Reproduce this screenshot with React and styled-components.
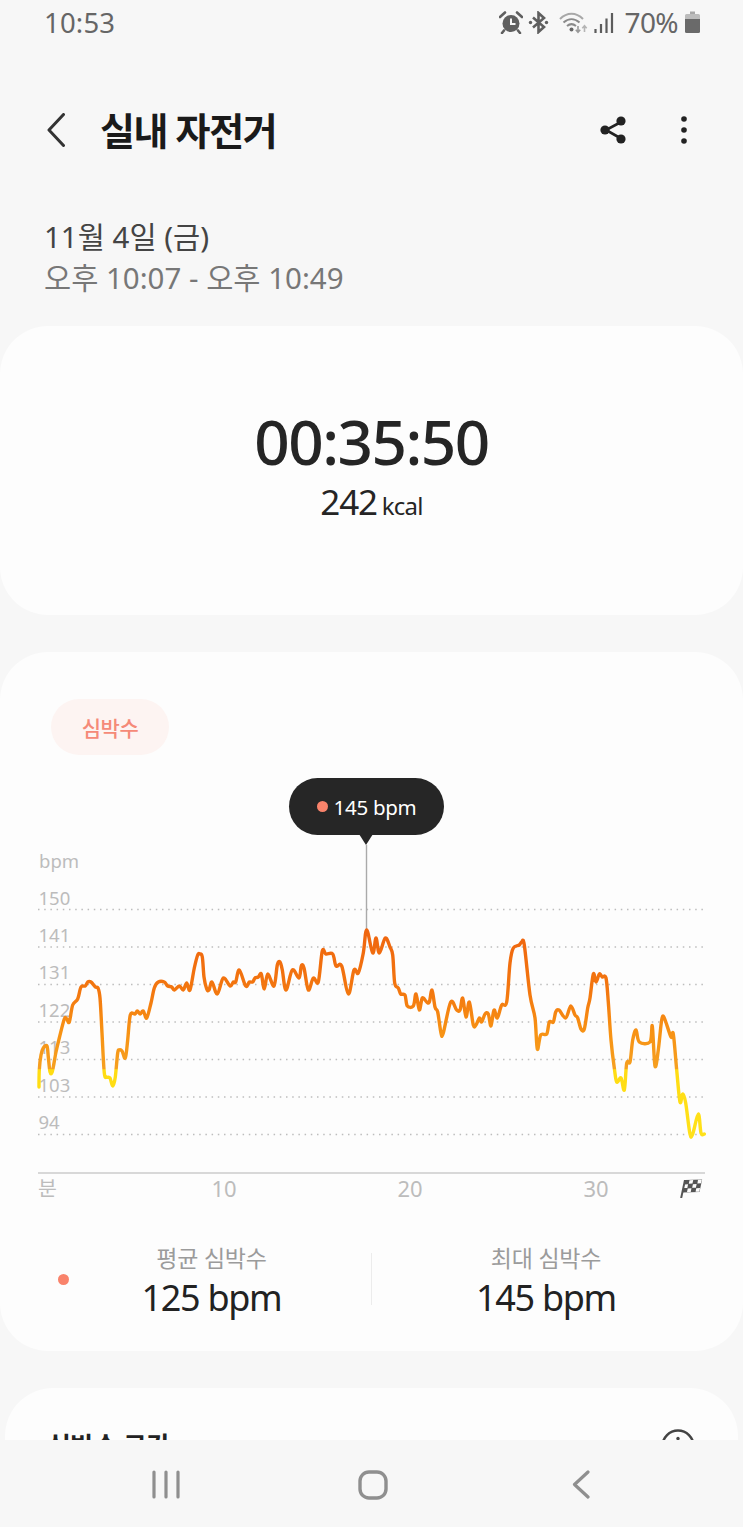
import React from 'react';
import styled, { createGlobalStyle } from 'styled-components';

const GlobalStyle = createGlobalStyle`
  html, body {
    margin: 0;
    padding: 0;
    background: #f7f7f7;
  }
  body {
    font-family: "Noto Sans", "Noto Sans CJK KR", sans-serif;
  }
`;

const Screen = styled.div`
  width: 743px;
  height: 1527px;
  display: flex;
  flex-direction: column;
  background: #f7f7f7;
  overflow: hidden;
`;

const Content = styled.div`
  height: 1440px;
  flex: none;
  overflow: hidden;
`;

const StatusBar = styled.div`
  height: 44px;
  display: flex;
  align-items: center;
  justify-content: space-between;
  padding: 0 43px 0 44px;
  color: #666;
`;

const Clock = styled.div`
  font-size: 27.5px;
  letter-spacing: 0.2px;
`;

const StatusIcons = styled.div`
  display: flex;
  align-items: center;
`;

const Battery = styled.div`
  font-size: 28px;
  letter-spacing: -0.6px;
  margin: 0 7px 0 10px;
`;

const Header = styled.div`
  display: flex;
  align-items: center;
  height: 44px;
  margin-top: 64px;
  padding-left: 47px;
`;

const Title = styled.h1`
  flex: 1;
  margin: 0 0 0 35px;
  padding-bottom: 4px;
  font-size: 38px;
  font-weight: 700;
  letter-spacing: -1.4px;
  color: #1a1a1a;
`;

const HeaderIcons = styled.div`
  display: flex;
  align-items: center;
  gap: 54px;
  padding-right: 56px;
`;

const DateBlock = styled.div`
  padding: 64px 44px 28px;
`;

const DateLine = styled.div`
  height: 41px;
  line-height: 41px;
  font-size: 29.5px;
  white-space: nowrap;
  color: ${(p) => (p.$muted ? '#777' : '#444')};
`;

const Card = styled.section`
  background: #fdfdfd;
  border-radius: 48px;
  margin: 0 ${(p) => p.$inset || 0}px 37px;
  height: ${(p) => p.$height}px;
  box-sizing: border-box;
`;

const SummaryCard = styled(Card)`
  display: flex;
  flex-direction: column;
  align-items: center;
  padding-top: 80px;
`;

const Timer = styled.div`
  font-size: 62px;
  font-weight: 500;
  line-height: 70px;
  letter-spacing: -1.5px;
  color: #252525;
`;

const Calories = styled.div`
  display: flex;
  align-items: baseline;
  gap: 5px;
  margin-top: 1px;
  color: #252525;
  font-size: 35px;
  line-height: 50px;
  letter-spacing: -1.2px;
  small {
    font-size: 24px;
    letter-spacing: -0.8px;
  }
`;

const Chip = styled.div`
  width: 118px;
  height: 56px;
  margin-left: 51px;
  border-radius: 28px;
  display: flex;
  align-items: center;
  justify-content: center;
  background: #fdf4f2;
  color: #f58a78;
  font-size: 21px;
  font-weight: 500;
  letter-spacing: -0.5px;
`;

const HeartCard = styled(Card)`
  padding-top: 47px;
`;

const ChartWrap = styled.div`
  position: relative;
  height: 440px;
  margin-top: 15px;
`;

const ChartSvg = styled.svg`
  display: block;
`;

const AxisLabel = styled.text`
  font-family: "Noto Sans", "Noto Sans CJK KR", sans-serif;
  font-size: ${(p) => p.$size || 18.5}px;
  fill: #bcbcbc;
`;

const Tooltip = styled.div`
  position: absolute;
  left: 289px;
  top: 8px;
  width: 155px;
  height: 57px;
  border-radius: 29px;
  background: #262626;
  color: #fff;
  font-size: 20.5px;
  letter-spacing: -0.3px;
  display: flex;
  align-items: center;
  justify-content: center;
  gap: 6px;
  &::after {
    content: '';
    position: absolute;
    left: 70px;
    top: 56px;
    border: 7.5px solid transparent;
    border-top: 11px solid #262626;
    border-bottom: 0;
  }
`;

const Dot = styled.span`
  width: 11px;
  height: 11px;
  border-radius: 50%;
  background: #f9836b;
  flex: none;
`;

const Stats = styled.div`
  display: grid;
  grid-template-columns: 319px 1fr;
  padding: 32px 22px 0 52px;
`;

const LegendDot = styled(Dot)`
  grid-area: 1 / 1;
  align-self: center;
  margin: 0 0 0 6px;
`;

const Stat = styled.div`
  grid-area: 1 / ${(p) => p.$col};
  display: flex;
  flex-direction: column;
  align-items: center;
  height: 74px;
`;

const Divider = styled.div`
  grid-area: 1 / 2;
  justify-self: start;
  width: 1px;
  height: 52px;
  margin-top: 11px;
  background: #ececec;
`;

const StatLabel = styled.div`
  font-size: 23px;
  line-height: 32px;
  letter-spacing: -0.2px;
  color: #9b9b9b;
`;

const StatValue = styled.div`
  font-size: 36px;
  line-height: 48px;
  letter-spacing: -1.3px;
  color: #222;
`;

const ZoneHeader = styled.div`
  display: flex;
  align-items: center;
  justify-content: space-between;
  padding: 40px 43px 0 42px;
`;

const ZoneTitle = styled.div`
  font-size: 26px;
  font-weight: 700;
  line-height: 36px;
  letter-spacing: -0.6px;
  color: #222;
`;

const NavBar = styled.div`
  flex: 1;
  display: grid;
  grid-template-columns: repeat(3, 1fr);
  justify-items: center;
  padding: 30px 58px 0 62px;
  background: #f7f7f7;
`;

const points = [
  [39, 1087], [39.3, 1070], [41, 1055], [43.3, 1048], [47, 1046], [48.3, 1057], [50, 1072], [51.7, 1073],
  [53.3, 1067], [56, 1052], [59.3, 1038], [64.3, 1019], [66.7, 1019], [69.3, 1022], [72.7, 1005], [77.7, 999],
  [81, 987], [85.3, 986], [87.7, 982], [91, 982], [95.3, 987], [98, 988], [100, 998], [102, 1033],
  [104.3, 1073], [106.7, 1077], [110, 1078], [112.7, 1086], [115.3, 1077], [117.7, 1053], [119.3, 1050], [122, 1051],
  [125.3, 1058], [127.7, 1040], [130.3, 1015], [135, 1014], [137.3, 1011], [140.3, 1014], [143.3, 1011], [146.7, 1018],
  [151, 1003], [154.3, 988], [158.3, 982], [164.3, 982], [167.7, 986], [171.7, 987], [174.3, 990], [179.3, 986],
  [183.3, 990], [186.7, 983], [190, 990], [194.3, 968], [197.7, 955], [200, 954], [202.3, 957], [204, 977],
  [206.7, 989], [209, 990], [212, 982], [217.3, 994], [223.3, 978], [230, 986], [233.3, 982], [235.7, 982],
  [239.3, 970], [245.7, 986], [249.3, 982], [252.7, 982], [255, 978], [258.3, 977], [261.3, 974], [264.3, 989],
  [267.7, 974], [274, 986], [277.3, 965], [280, 962], [282.3, 970], [286, 990], [292.3, 970], [299, 978],
  [301.3, 966], [304, 968], [308.3, 990], [313.3, 978], [318.3, 982], [322.3, 951], [326, 954], [332.7, 954],
  [336, 966], [341.7, 966], [348.3, 994], [354, 970], [358.3, 973], [363.3, 953], [366.7, 930], [372.7, 953],
  [376, 938], [379.3, 953], [385.3, 938], [390, 947], [392.7, 955], [394.7, 983], [398.3, 988], [400.7, 994],
  [405, 995], [407.3, 1006], [413.3, 1006], [416, 994], [419.3, 1010], [422.3, 998], [426.7, 1002], [429.3, 1002],
  [432, 990], [435, 1007], [437.7, 1012], [441, 1033], [443.3, 1033], [450.7, 1002], [456.7, 1010], [460, 1010],
  [462.7, 998], [466, 1017], [469.3, 1002], [473.3, 1025], [476, 1025], [479.3, 1018], [481.7, 1022], [485, 1014],
  [488.3, 1014], [491, 1026], [494, 1010], [497.3, 1018], [501.7, 1005], [506.7, 1002], [510, 963], [513.3, 948],
  [519.3, 945], [521.7, 942], [524.3, 945], [530, 995], [535, 1018], [537.3, 1049], [540.7, 1035], [546.7, 1034],
  [549.3, 1022], [553.3, 1022], [555.7, 1012], [559, 1010], [565.7, 1018], [570.7, 1006], [575, 1015], [577.7, 1018],
  [581, 1029], [584.3, 1029], [587.7, 1008], [590, 998], [593.3, 974], [596, 982], [599.3, 974], [602.3, 977],
  [606, 978], [608.3, 1002], [611, 1040], [614.3, 1068], [616.7, 1082], [621, 1078], [624.3, 1090], [626.7, 1063],
  [630, 1062], [632.7, 1040], [636, 1030], [639.3, 1042], [650, 1042], [652.3, 1026], [655, 1066], [658.3, 1050],
  [661.7, 1020], [664.3, 1018], [671, 1037], [673.3, 1034], [676.7, 1070], [680, 1102], [682.7, 1094], [685.7, 1103],
  [690, 1134], [692.7, 1134], [698.3, 1114], [701, 1133], [704.3, 1134],
];

// catmull-rom through the traced samples, keeps the peaks round
const smoothPath = (pts) => {
  let d = `M${pts[0][0]} ${pts[0][1]}`;
  for (let i = 0; i < pts.length - 1; i++) {
    const p0 = pts[i - 1] || pts[i];
    const p1 = pts[i];
    const p2 = pts[i + 1];
    const p3 = pts[i + 2] || p2;
    const c1x = p1[0] + (p2[0] - p0[0]) / 6;
    const c1y = p1[1] + (p2[1] - p0[1]) / 6;
    const c2x = p2[0] - (p3[0] - p1[0]) / 6;
    const c2y = p2[1] - (p3[1] - p1[1]) / 6;
    d += `C${c1x.toFixed(1)} ${c1y.toFixed(1)} ${c2x.toFixed(1)} ${c2y.toFixed(1)} ${p2[0]} ${p2[1]}`;
  }
  return d;
};

const gridLines = [
  { y: 909.5, label: '150', base: 905 },
  { y: 947, label: '141', base: 942 },
  { y: 984.5, label: '131', base: 979 },
  { y: 1022, label: '122', base: 1017 },
  { y: 1059.5, label: '113', base: 1054 },
  { y: 1097, label: '103', base: 1092 },
  { y: 1134.5, label: '94', base: 1129 },
];

const flagCells = [[1, 0], [3, 0], [0, 1], [2, 1], [1, 2], [3, 2]];

const Flag = () => (
  <g transform="translate(685 1180) skewX(-12) skewY(-2)">
    <rect x="0" y="0" width="17" height="12.5" fill="#555" />
    {flagCells.map(([cx, cy]) => (
      <rect key={`${cx}-${cy}`} x={cx * 4.25 + 0.3} y={cy * 4.17 + 0.3} width="3.7" height="3.6" fill="#fdfdfd" />
    ))}
    <path d="M0 0L0 18" stroke="#555" strokeWidth="2" />
  </g>
);

const Chart = () => (
  <ChartSvg width="743" height="440" viewBox="0 770 743 440">
    <defs>
      <linearGradient id="bpmLine" gradientUnits="userSpaceOnUse" x1="0" y1="930" x2="0" y2="1134">
        <stop offset="0" stopColor="#ef650f" />
        <stop offset="0.3" stopColor="#f3770f" />
        <stop offset="0.5" stopColor="#f79214" />
        <stop offset="0.68" stopColor="#f6a020" />
        <stop offset="0.685" stopColor="#ffdc12" />
        <stop offset="1" stopColor="#ffe11a" />
      </linearGradient>
    </defs>
    <AxisLabel x="39" y="868">bpm</AxisLabel>
    {gridLines.map((l) => (
      <g key={l.label}>
        <AxisLabel x="38.5" y={l.base}>{l.label}</AxisLabel>
        <line x1="38" x2="705" y1={l.y} y2={l.y} stroke="#bdbdbd" strokeWidth="1.5" strokeDasharray="1.5 4.7" />
      </g>
    ))}
    <line x1="366.5" x2="366.5" y1="845" y2="932" stroke="#aaa" strokeWidth="1.4" />
    <path d={smoothPath(points)} fill="none" stroke="url(#bpmLine)" strokeWidth="3.4" strokeLinejoin="round" strokeLinecap="round" />
    <line x1="38" x2="705" y1="1173" y2="1173" stroke="#d8d8d8" strokeWidth="2" />
    <AxisLabel x="38" y="1196" $size={20.5}>분</AxisLabel>
    <AxisLabel x="224" y="1197" $size={22} textAnchor="middle">10</AxisLabel>
    <AxisLabel x="410" y="1197" $size={22} textAnchor="middle">20</AxisLabel>
    <AxisLabel x="596" y="1197" $size={22} textAnchor="middle">30</AxisLabel>
    <Flag />
  </ChartSvg>
);

const AlarmIcon = () => (
  <svg width="24" height="23" viewBox="0 0 24 23">
    <circle cx="12" cy="12.5" r="8.5" fill="#5f5f5f" />
    <path d="M12 7.5V13H16.5" fill="none" stroke="#f7f7f7" strokeWidth="2" />
    <path d="M1 6L6 1.5M23 6L18 1.5M5 19.5L3 22M19 19.5L21 22" fill="none" stroke="#5f5f5f" strokeWidth="2.6" strokeLinecap="round" />
  </svg>
);

const BluetoothIcon = () => (
  <svg width="21" height="23" viewBox="0 0 21 23" style={{ marginLeft: 5 }}>
    <path d="M5 6.5L16 16L10.5 21V2L16 7L5 16.5" fill="none" stroke="#5f5f5f" strokeWidth="2.6" />
    <circle cx="2.5" cy="11.5" r="1.7" fill="#5f5f5f" />
    <circle cx="18.5" cy="11.5" r="1.7" fill="#5f5f5f" />
  </svg>
);

const WifiIcon = () => (
  <svg width="29" height="23" viewBox="0 0 29 23" style={{ marginLeft: 10 }}>
    <path d="M1 8C8 1 17 1 24 8" fill="none" stroke="#a8a8a8" strokeWidth="2" />
    <path d="M4.5 11.5C9.5 7 15.5 7 20.5 11.5M8 15C11 12.5 14 12.5 17 15" fill="none" stroke="#8a8a8a" strokeWidth="2" />
    <circle cx="12.5" cy="18.5" r="2" fill="#666" />
    <path d="M19 15V21M16.8 18.8L19 21.3L21.2 18.8" fill="none" stroke="#9a9a9a" strokeWidth="1.6" />
    <path d="M25.5 21V15M23.3 17.2L25.5 14.8L27.7 17.2" fill="none" stroke="#b5b5b5" strokeWidth="1.6" />
  </svg>
);

const SignalIcon = () => (
  <svg width="20" height="21" viewBox="0 0 20 21" style={{ marginLeft: 6 }}>
    <path d="M1.5 17V21M7 12V21M12.5 6.5V21M18 1V21" stroke="#5c5c5c" strokeWidth="2.2" />
  </svg>
);

const BatteryIcon = () => (
  <svg width="15" height="22" viewBox="0 0 15 22">
    <path d="M5 0.5H10V3H5Z" fill="#a8a8a8" />
    <path d="M1.5 3H13.5A1.5 1.5 0 0 1 15 4.5V8H0V4.5A1.5 1.5 0 0 1 1.5 3Z" fill="#bcbcbc" />
    <path d="M0 8H15V20.5A1.5 1.5 0 0 1 13.5 22H1.5A1.5 1.5 0 0 1 0 20.5Z" fill="#6a6a6a" />
  </svg>
);

const BackIcon = () => (
  <svg width="18" height="34" viewBox="0 0 18 34">
    <path d="M16.5 1.5L2 17L16.5 32.5" fill="none" stroke="#333" strokeWidth="3" strokeLinecap="round" strokeLinejoin="round" />
  </svg>
);

const ShareIcon = () => (
  <svg width="27" height="28" viewBox="0 0 27 28">
    <path d="M21 6L6 14L21 22.5" fill="none" stroke="#222" strokeWidth="2.6" />
    <circle cx="21" cy="5" r="4.6" fill="#222" />
    <circle cx="5" cy="14" r="4.6" fill="#222" />
    <circle cx="21" cy="23" r="4.6" fill="#222" />
  </svg>
);

const MoreIcon = () => (
  <svg width="6" height="28" viewBox="0 0 6 28">
    <circle cx="3" cy="3" r="2.8" fill="#222" />
    <circle cx="3" cy="14" r="2.8" fill="#222" />
    <circle cx="3" cy="25" r="2.8" fill="#222" />
  </svg>
);

const InfoIcon = () => (
  <svg width="34" height="34" viewBox="0 0 34 34">
    <circle cx="17" cy="17" r="15.5" fill="none" stroke="#444" strokeWidth="2.5" />
    <circle cx="17" cy="9.5" r="1.7" fill="#444" />
    <path d="M17 14V25" stroke="#444" strokeWidth="2.5" />
  </svg>
);

const RecentsIcon = () => (
  <svg width="28" height="29" viewBox="0 0 28 29">
    <path d="M2 2V27M14 2V27M26 2V27" stroke="#8f8f8f" strokeWidth="3.2" strokeLinecap="round" />
  </svg>
);

const HomeIcon = () => (
  <svg width="30" height="30" viewBox="0 0 30 30">
    <rect x="2" y="2" width="26" height="26" rx="9" fill="none" stroke="#8f8f8f" strokeWidth="3.4" />
  </svg>
);

const NavBackIcon = () => (
  <svg width="18" height="29" viewBox="0 0 18 29">
    <path d="M16 2L2.5 14.5L16 27" fill="none" stroke="#8f8f8f" strokeWidth="3.2" strokeLinecap="round" strokeLinejoin="round" />
  </svg>
);

export default function App() {
  return (
    <Screen>
      <GlobalStyle />
      <Content>
        <StatusBar>
          <Clock>10:53</Clock>
          <StatusIcons>
            <AlarmIcon />
            <BluetoothIcon />
            <WifiIcon />
            <SignalIcon />
            <Battery>70%</Battery>
            <BatteryIcon />
          </StatusIcons>
        </StatusBar>
        <Header>
          <BackIcon />
          <Title>실내 자전거</Title>
          <HeaderIcons>
            <ShareIcon />
            <MoreIcon />
          </HeaderIcons>
        </Header>
        <DateBlock>
          <DateLine>11월 4일 (금)</DateLine>
          <DateLine $muted>오후 10:07 - 오후 10:49</DateLine>
        </DateBlock>
        <SummaryCard $height={289}>
          <Timer>00:35:50</Timer>
          <Calories>242<small>kcal</small></Calories>
        </SummaryCard>
        <HeartCard $height={699}>
          <Chip>심박수</Chip>
          <ChartWrap>
            <Chart />
            <Tooltip><Dot />145 bpm</Tooltip>
          </ChartWrap>
          <Stats>
            <LegendDot />
            <Stat $col={1}>
              <StatLabel>평균 심박수</StatLabel>
              <StatValue>125 bpm</StatValue>
            </Stat>
            <Divider />
            <Stat $col={2}>
              <StatLabel>최대 심박수</StatLabel>
              <StatValue>145 bpm</StatValue>
            </Stat>
          </Stats>
        </HeartCard>
        <Card $height={300} $inset={5}>
          <ZoneHeader>
            <ZoneTitle>심박수 구간</ZoneTitle>
            <InfoIcon />
          </ZoneHeader>
        </Card>
      </Content>
      <NavBar>
        <RecentsIcon />
        <HomeIcon />
        <NavBackIcon />
      </NavBar>
    </Screen>
  );
}
